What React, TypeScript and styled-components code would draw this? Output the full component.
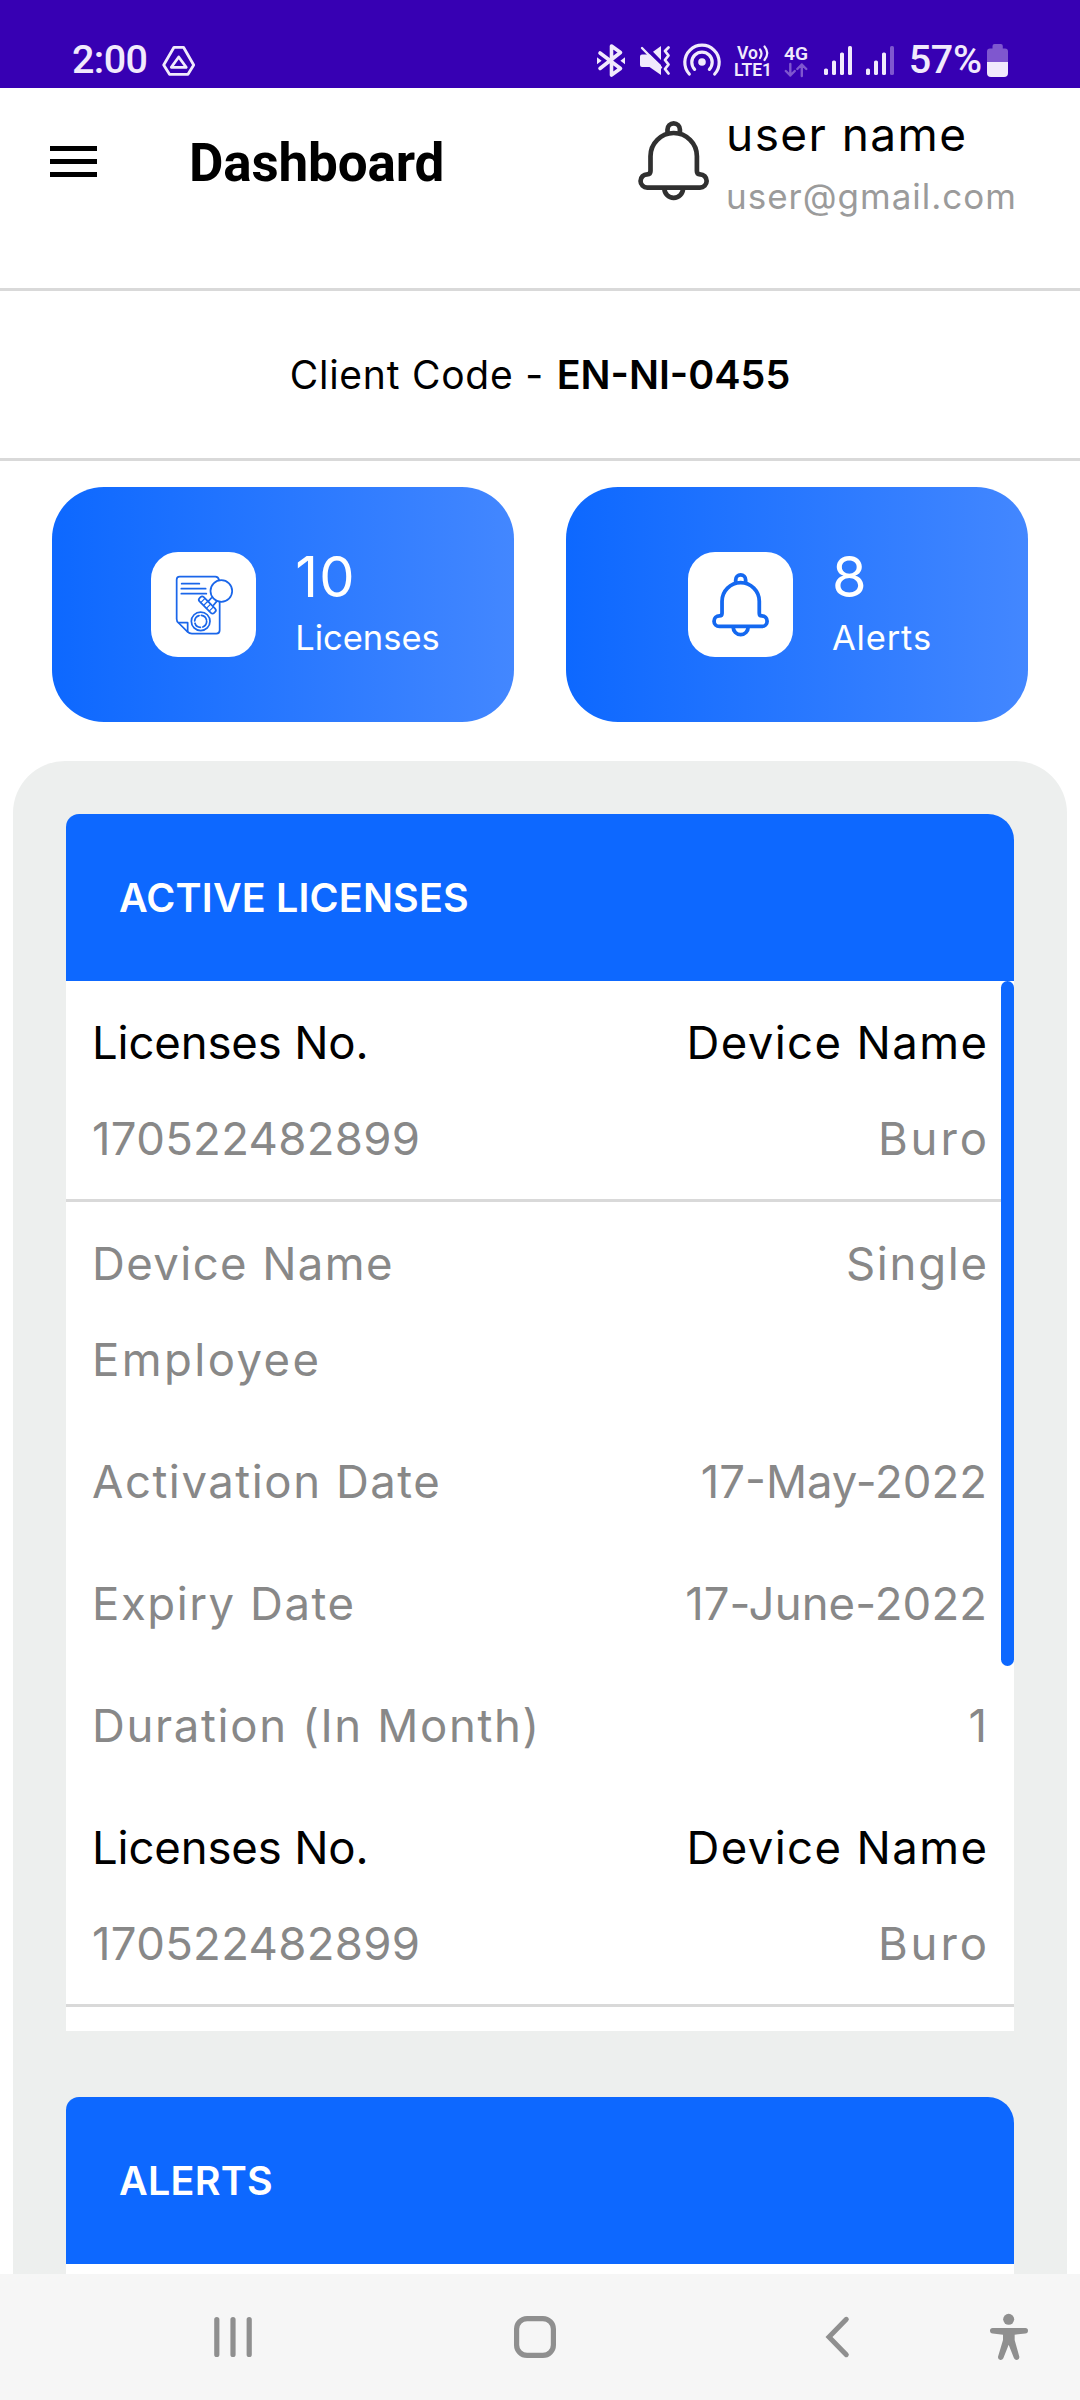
import React from "react";
import styled, { createGlobalStyle, css } from "styled-components";

const BLUE = "#0d68ff";
const RULE = "#d9d9d9";
const STATUS = "#f1eafc";
const STATUS_DIM = "#7f57cf";
const NAV_ICON = "#8f8f8f";

const GlobalStyle = createGlobalStyle`
  *, *::before, *::after { box-sizing: border-box; }
  body {
    margin: 0;
    background: #fff;
    font-family: Inter, "Open Sans", sans-serif;
    color: #000;
  }
  svg { display: block; flex: none; overflow: visible; }
`;

const Screen = styled.div`
  width: 1080px;
  height: 2400px;
  display: flex;
  flex-direction: column;
  overflow: hidden;
  background: #fff;
`;

/* Tracked text; the negative margin drops the tracking after the last letter. */
const Text = styled.span<{ $track?: number }>`
  white-space: nowrap;
  ${({ $track = 0 }) => css`
    letter-spacing: ${$track}px;
    margin-right: ${-$track}px;
  `}
`;

/* ---------- status bar ---------- */

const StatusBar = styled.div`
  flex: none;
  height: 88px;
  padding: 42px 72px 10px 72px;
  display: flex;
  justify-content: space-between;
  background: #3700b3;
  color: ${STATUS};
  font-family: Roboto, sans-serif;
`;

const StatusGroup = styled.div`
  display: flex;
  align-items: flex-start;
`;

const StatusItem = styled.div<{ $before?: number }>`
  margin-left: ${({ $before = 0 }) => $before}px;
`;

const StatusText = styled(Text)`
  display: block;
  font-size: 39.5px;
  font-weight: 500;
  line-height: 36px;
  height: 36px;
`;

/* ---------- app header ---------- */

const Header = styled.header`
  flex: none;
  height: 203px;
  padding: 18px 50px 0;
  display: flex;
  align-items: flex-start;
  border-bottom: 3px solid ${RULE};
`;

const MenuButton = styled.div`
  width: 47px;
  margin-top: 40px;
  display: flex;
  flex-direction: column;
  gap: 8px;
`;

const MenuBar = styled.span`
  height: 5px;
  background: #000;
`;

const Title = styled.h1`
  margin: 26px auto 0 92px;
  font: 700 53px/62px Roboto, sans-serif;
  letter-spacing: -0.15px;
`;

const Profile = styled.div`
  width: 392px;
  display: flex;
  gap: 17px;
`;

const BellSlot = styled.div`
  margin-top: 15px;
`;

const ProfileText = styled.div`
  display: flex;
  flex-direction: column;
  gap: 12px;
`;

const UserName = styled(Text)`
  font-size: 46px;
  line-height: 56px;
`;

const UserMail = styled(Text)`
  font-size: 35px;
  line-height: 44px;
  color: #9b9b9b;
`;

/* ---------- client code ---------- */

const ClientBar = styled.div`
  flex: none;
  height: 170px;
  display: flex;
  align-items: center;
  justify-content: center;
  gap: 13.5px;
  border-bottom: 3px solid ${RULE};
  font-size: 39px;
`;

const ClientCode = styled(Text)`
  font-size: 39.5px;
  font-weight: 600;
`;

/* ---------- stat cards ---------- */

const Stats = styled.div`
  flex: none;
  display: grid;
  grid-template-columns: 1fr 1fr;
  gap: 52px;
  padding: 26px 52px 39px;
`;

const StatCard = styled.div`
  height: 235px;
  padding-left: 25px;
  display: flex;
  align-items: center;
  justify-content: center;
  gap: 39px;
  border-radius: 52px;
  background: linear-gradient(90deg, #0d68ff, #4387ff);
  color: #fff;
`;

const IconTile = styled.div`
  flex: none;
  width: 105px;
  height: 105px;
  border-radius: 27px;
  display: grid;
  place-items: center;
  background: #fff;
`;

const StatText = styled.div`
  display: flex;
  flex-direction: column;
  gap: 10px;
  padding-bottom: 4px;
`;

const StatValue = styled(Text)`
  font-size: 56px;
  line-height: 60px;
`;

const StatLabel = styled(Text)`
  font-size: 34.5px;
  line-height: 42px;
`;

/* ---------- panel ---------- */

const Panel = styled.main`
  flex: 1;
  min-height: 0;
  margin: 0 13px;
  padding: 53px 53px 0;
  display: flex;
  flex-direction: column;
  gap: 66px;
  overflow: hidden;
  border-radius: 52px 52px 0 0;
  background: #edefee;
`;

const Section = styled.section`
  flex: none;
  display: flex;
  flex-direction: column;
`;

const SectionHeader = styled.h2`
  margin: 0;
  height: 167px;
  padding-left: 53px;
  display: flex;
  align-items: center;
  border-radius: 13px 26px 0 0;
  background: ${BLUE};
  color: #fff;
  font-size: 39.5px;
  font-weight: 600;
`;

const SectionBody = styled.div`
  position: relative;
  height: 1050px;
  overflow: hidden;
  background: #fff;
`;

const ScrollThumb = styled.span`
  position: absolute;
  top: 0;
  right: 0;
  width: 13px;
  height: 685px;
  border-radius: 6.5px;
  background: ${BLUE};
`;

const Row = styled.div<{ $head?: boolean }>`
  padding: 14px 27px 12px 26px;
  display: flex;
  justify-content: space-between;
  font-size: 45.5px;
  line-height: 96px;
  color: #888;
  ${({ $head }) => $head && css`border-bottom: 3px solid ${RULE};`}
`;

const Cell = styled.div<{ $end?: boolean }>`
  display: flex;
  flex-direction: column;
  align-items: ${({ $end }) => ($end ? "flex-end" : "flex-start")};
`;

const Strong = styled(Text)`
  color: #000;
`;

/* ---------- system navigation ---------- */

const NavBar = styled.nav`
  flex: none;
  height: 126px;
  padding-left: 82px;
  display: grid;
  grid-template-columns: 302px 302px 302px 42px;
  place-items: center;
  background: #f6f6f6;
`;

/* ---------- icons ---------- */

const BellIcon = ({ width, color }: { width: number; color: string }) => (
  <svg width={width} height={(width * 79) / 71} viewBox="0 0 71 79" fill="none" stroke={color} strokeWidth="4.7">
    <path d="M12.5 50V35.2A23.2 23.2 0 0 1 58.9 35.2V50Q58.9 53.3 62 53.3A6.65 6.65 0 0 1 62 66.6H9.2A6.65 6.65 0 0 1 9.2 53.3Q12.5 53.3 12.5 50Z" />
    <path d="M29.5 12.5V8.6A6.2 6.2 0 0 1 41.9 8.6V12.5" />
    <path d="M26.4 67.5A9.3 9.3 0 0 0 45 67.5" />
  </svg>
);

const LicenseIcon = () => (
  <svg width="60" height="61.7" viewBox="130 130 180 185" fill="none" stroke="#1a66ea" strokeWidth="5.2" strokeLinecap="round" strokeLinejoin="round">
    <path d="M265 148Q263 138 254 138H147Q138 138 138 147V265Q138 273 144 277L170 303Q176 309 184 309H257Q267 309 267 299V214" />
    <path d="M146 276H171V303" />
    <path d="M153 159H206M152 174H225M152 189H227" />
    <circle cx="272" cy="181" r="32.5" />
    <path d="M242 202L232 213M258 212L249 223" />
    <g transform="rotate(45 230 223)">
      <rect x="199" y="214" width="62" height="18" rx="7" />
      <path strokeWidth="3.5" d="M211 214V232M223 214V232M235 214V232M247 214V232" />
    </g>
    <circle cx="210" cy="272" r="28" />
    <circle cx="210" cy="272" r="18" strokeDasharray="21 7.3" />
  </svg>
);

const DriveIcon = () => (
  <svg width="34" height="36" viewBox="163 42 34 36" fill="none" stroke={STATUS} strokeWidth="2.8" strokeLinejoin="round">
    <path d="M175 47.3H184.5L194.7 65L189 74.3H170.5L164.7 65Z" />
    <path d="M179.7 57L187.2 67.3H172.3Z" />
  </svg>
);

const BluetoothIcon = () => (
  <svg width="28" height="36" viewBox="597 42 28 36" fill="none" stroke={STATUS} strokeWidth="3.6" strokeLinecap="round" strokeLinejoin="round">
    <path d="M600 53L620.5 68.5L611.5 75V46L620.5 52.5L600 68.5" />
    <path fill={STATUS} stroke="none" d="M597 57.3L601.6 60.8L597 64.3ZM625 57.3L620.4 60.8L625 64.3Z" />
  </svg>
);

const MuteIcon = () => (
  <svg width="30" height="36" viewBox="640 42 30 36" fill="none" stroke={STATUS} strokeLinecap="round">
    <path fill={STATUS} stroke="none" d="M642 54.5H650L661 65V75L649.5 67H642Q640 67 640 65V56.5Q640 54.5 642 54.5ZM661 46V60L653 51.8Z" />
    <path strokeWidth="2.4" d="M642 48L661 67.5" />
    <path strokeWidth="2.8" strokeLinejoin="round" d="M668.5 47.5L665 51L668.5 55.5L665 60L668.5 64.5L665 69L668.5 73.5" />
  </svg>
);

const HotspotIcon = () => (
  <svg width="38" height="36" viewBox="683 42 38 36" fill="none" stroke={STATUS} strokeWidth="3.2" strokeLinecap="round">
    <circle cx="702" cy="62" r="3.8" fill={STATUS} stroke="none" />
    <path d="M689.3 74A17.2 17.2 0 1 1 714.7 74" />
    <path d="M694.6 69.3A10.2 10.2 0 1 1 709.4 69.3" />
  </svg>
);

const VolteIcon = () => (
  <svg width="38" height="36" viewBox="734 42 38 36" fontFamily="Roboto, sans-serif" fontWeight="600" fill={STATUS}>
    <text x="737" y="58.7" fontSize="17.5" textLength="21">Vo</text>
    <text x="734" y="76" fontSize="17.5" textLength="38" lengthAdjust="spacingAndGlyphs">LTE1</text>
    <path fill="none" stroke={STATUS} strokeWidth="2.2" strokeLinecap="round" d="M760 49.5Q763 53.5 760 58M764.5 46.5Q770 53 764.5 60" />
  </svg>
);

const DataIcon = () => (
  <svg width="24" height="36" viewBox="784 42 24 36" fontFamily="Roboto, sans-serif" fontWeight="600" fill={STATUS}>
    <text x="784" y="59.7" fontSize="19" textLength="24" lengthAdjust="spacingAndGlyphs">4G</text>
    <path fill="none" stroke={STATUS_DIM} strokeWidth="2.4" strokeLinecap="round" strokeLinejoin="round" d="M790.3 64V75.5M785.8 71L790.3 75.5L794.8 71M801.8 76V64.5M797.3 69L801.8 64.5L806.3 69" />
  </svg>
);

const SignalIcon = ({ bars }: { bars: number }) => (
  <svg width="28" height="36" viewBox="0 0 28 36">
    {[26.5, 18.5, 10.5, 4].map((top, i) => (
      <rect key={top} x={i * 8} y={top} width="4" height={33 - top} rx="1.6" fill={i < bars ? STATUS : STATUS_DIM} />
    ))}
  </svg>
);

const BatteryIcon = () => (
  <svg width="21" height="36" viewBox="987 42 21 36">
    <path fill={STATUS_DIM} d="M992.5 48.5V46Q992.5 44 994.5 44H1000.8Q1002.8 44 1002.8 46V48.5H1005Q1008 48.5 1008 51.5V63H987V51.5Q987 48.5 990 48.5Z" />
    <path fill={STATUS} d="M987 62H1008V73Q1008 77 1004 77H991Q987 77 987 73Z" />
  </svg>
);

const RecentsIcon = () => (
  <svg width="38" height="42" viewBox="0 0 38 42" stroke={NAV_ICON} strokeWidth="5.2" strokeLinecap="round">
    <path d="M2.8 3.5V38.5M19 3.5V38.5M35.2 3.5V38.5" />
  </svg>
);

const HomeIcon = () => (
  <svg width="42" height="42" viewBox="0 0 42 42" fill="none" stroke={NAV_ICON} strokeWidth="5.2">
    <rect x="2.6" y="2.6" width="36.8" height="36.8" rx="10.5" />
  </svg>
);

const BackIcon = () => (
  <svg width="23" height="42" viewBox="0 0 23 42" fill="none" stroke={NAV_ICON} strokeWidth="5" strokeLinecap="round">
    <path d="M20.3 3.3L3 21L20.3 38.7" />
  </svg>
);

const AccessibilityIcon = () => (
  <svg width="38" height="46" viewBox="570 75 114 138" fill={NAV_ICON}>
    <circle cx="626" cy="91" r="16.5" />
    <path d="M578 117H676Q684 117 684 125.500Q684 133 676 133.500L644 137V153L658 203Q659 211 651 213Q645 213.500 642 208L626 167L610 208Q607 213.500 601 213Q593 211 594 203L609 153V137L578 133.500Q570 133 570 125.500Q570 117 578 117Z" />
  </svg>
);

/* ---------- data ---------- */

type Entry = { value: string; track: number };

const details: { label: Entry[]; value: Entry }[] = [
  {
    label: [
      { value: "Device Name", track: 1.4 },
      { value: "Employee", track: 2.4 },
    ],
    value: { value: "Single", track: 1.7 },
  },
  { label: [{ value: "Activation Date", track: 1.53 }], value: { value: "17-May-2022", track: 0 } },
  { label: [{ value: "Expiry Date", track: 1.54 }], value: { value: "17-June-2022", track: 0.1 } },
  { label: [{ value: "Duration (In Month)", track: 1.65 }], value: { value: "1", track: 0 } },
];

const LicenseHead = () => (
  <Row $head>
    <Cell>
      <Strong $track={-0.15}>Licenses No.</Strong>
      <Text $track={0.3}>170522482899</Text>
    </Cell>
    <Cell $end>
      <Strong $track={1.4}>Device Name</Strong>
      <Text $track={2.9}>Buro</Text>
    </Cell>
  </Row>
);

export default function App() {
  return (
    <Screen>
      <GlobalStyle />
      <StatusBar>
        <StatusGroup>
          <StatusText $track={-0.6}>2:00</StatusText>
          <StatusItem $before={14}><DriveIcon /></StatusItem>
        </StatusGroup>
        <StatusGroup>
          <StatusItem><BluetoothIcon /></StatusItem>
          <StatusItem $before={15}><MuteIcon /></StatusItem>
          <StatusItem $before={13}><HotspotIcon /></StatusItem>
          <StatusItem $before={13}><VolteIcon /></StatusItem>
          <StatusItem $before={12}><DataIcon /></StatusItem>
          <StatusItem $before={16}><SignalIcon bars={4} /></StatusItem>
          <StatusItem $before={14}><SignalIcon bars={3} /></StatusItem>
          <StatusItem $before={15}><StatusText $track={-0.4}>57%</StatusText></StatusItem>
          <StatusItem $before={5}><BatteryIcon /></StatusItem>
        </StatusGroup>
      </StatusBar>

      <Header>
        <MenuButton>
          <MenuBar />
          <MenuBar />
          <MenuBar />
        </MenuButton>
        <Title>Dashboard</Title>
        <Profile>
          <BellSlot><BellIcon width={71} color="#303030" /></BellSlot>
          <ProfileText>
            <UserName $track={1.43}>user name</UserName>
            <UserMail $track={1}>user@gmail.com</UserMail>
          </ProfileText>
        </Profile>
      </Header>

      <ClientBar>
        <Text $track={0.76}>Client Code -</Text>
        <ClientCode>EN-NI-0455</ClientCode>
      </ClientBar>

      <Stats>
        <StatCard>
          <IconTile><LicenseIcon /></IconTile>
          <StatText>
            <StatValue $track={1.2}>10</StatValue>
            <StatLabel>Licenses</StatLabel>
          </StatText>
        </StatCard>
        <StatCard>
          <IconTile><BellIcon width={57} color="#1468f0" /></IconTile>
          <StatText>
            <StatValue>8</StatValue>
            <StatLabel $track={0.85}>Alerts</StatLabel>
          </StatText>
        </StatCard>
      </Stats>

      <Panel>
        <Section>
          <SectionHeader><Text $track={0.16}>ACTIVE LICENSES</Text></SectionHeader>
          <SectionBody>
            <LicenseHead />
            {details.map(({ label, value }) => (
              <Row key={label[0].value}>
                <Cell>
                  {label.map((line) => (
                    <Text key={line.value} $track={line.track}>{line.value}</Text>
                  ))}
                </Cell>
                <Cell $end>
                  <Text $track={value.track}>{value.value}</Text>
                </Cell>
              </Row>
            ))}
            <LicenseHead />
            <ScrollThumb />
          </SectionBody>
        </Section>
        <Section>
          <SectionHeader><Text $track={0.23}>ALERTS</Text></SectionHeader>
          <SectionBody />
        </Section>
      </Panel>

      <NavBar>
        <RecentsIcon />
        <HomeIcon />
        <BackIcon />
        <AccessibilityIcon />
      </NavBar>
    </Screen>
  );
}
